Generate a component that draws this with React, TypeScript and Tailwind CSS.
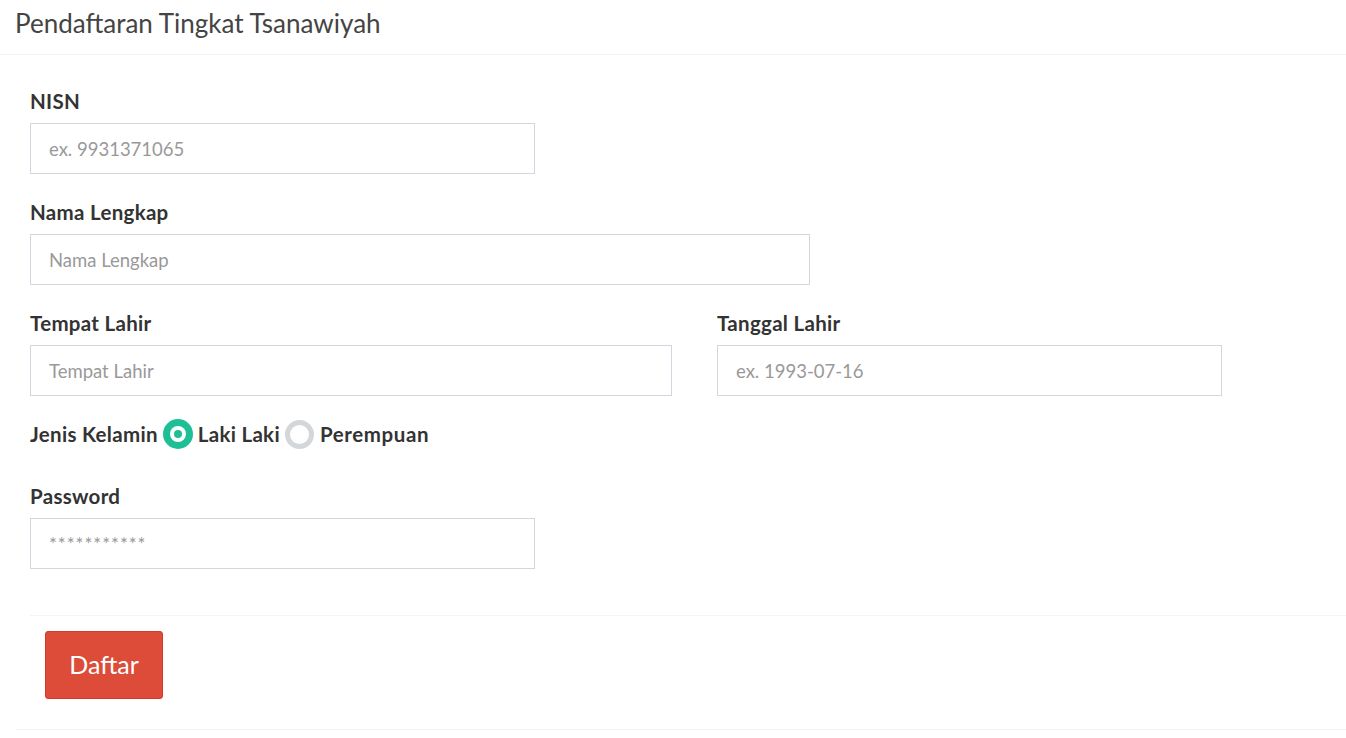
import React from "react";

const font = { fontFamily: "Lato, 'Open Sans', sans-serif" };

function Field({ label, placeholder, width, type = "text", extra = "" }: { label: string; placeholder: string; width: string; type?: string; extra?: string }) {
  return (
    <div className="flex flex-col">
      <label className="h-[26px] leading-[26px] text-[20.5px] tracking-[0.3px] font-bold text-[#333]">{label}</label>
      <input
        type={type}
        placeholder={placeholder}
        className={`mt-[9px] h-[51px] ${width} border border-[#d2d6de] bg-white px-[18px] text-[18.5px] text-[#555] placeholder:text-[#999] outline-none ${extra}`}
      />
    </div>
  );
}

export default function App() {
  return (
    <div className="min-h-[738px] w-[1346px] bg-white" style={font}>
      <div className="h-[55px] border-b border-[#f4f4f4] pl-[15px] flex items-center">
        <h3 className="text-[26px] text-[#444] leading-none -mt-[8px]">Pendaftaran Tingkat Tsanawiyah</h3>
      </div>
      <div className="pl-[30px] pt-[33px]">
        <Field label="NISN" placeholder="ex. 9931371065" width="w-[505px]" />
        <div className="mt-[25px]">
          <Field label="Nama Lengkap" placeholder="Nama Lengkap" width="w-[780px]" />
        </div>
        <div className="mt-[25px] flex gap-[45px]">
          <Field label="Tempat Lahir" placeholder="Tempat Lahir" width="w-[642px]" />
          <Field label="Tanggal Lahir" placeholder="ex. 1993-07-16" width="w-[505px]" />
        </div>
        <div className="mt-[23px] h-[30px] flex items-center text-[20.5px] tracking-[0.3px] font-bold text-[#333]">
          <span>Jenis Kelamin</span>
          <span className="ml-[5px] w-[30px] h-[30px] rounded-full bg-[#1fbf95] flex items-center justify-center">
            <span className="w-[16px] h-[16px] rounded-full bg-white flex items-center justify-center">
              <span className="w-[8px] h-[8px] rounded-full bg-[#1fbf95]" />
            </span>
          </span>
          <span className="ml-[5px]">Laki Laki</span>
          <span className="ml-[5px] w-[29px] h-[29px] rounded-full border-[5px] border-[#d3d7da] bg-white" />
          <span className="ml-[6px] tracking-[0.6px]">Perempuan</span>
        </div>
        <div className="mt-[34px]">
          <Field label="Password" placeholder="***********" width="w-[505px]" type="password" extra="placeholder:tracking-[1px] tracking-[1px]" />
        </div>
        <div className="mt-[46px] border-t border-[#f4f4f4]" />
        <div className="pt-[15px] pl-[15px]">
          <button className="w-[118px] h-[68px] rounded-[3px] bg-[#dd4b39] border border-[#d73925] text-white text-[25px]">
            Daftar
          </button>
        </div>
      </div>
      <div className="ml-[15px] mt-[30px] border-t border-[#f4f4f4]" />
    </div>
  );
}
